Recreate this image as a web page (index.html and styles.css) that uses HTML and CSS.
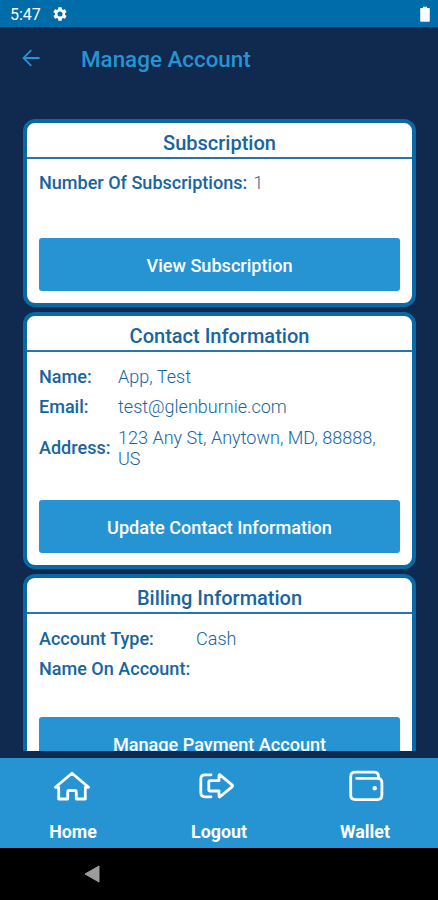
FILE: index.html
```html
<!DOCTYPE html>
<html lang="en">
<head>
<meta charset="utf-8">
<meta name="viewport" content="width=device-width, initial-scale=1">
<title>Manage Account</title>
<link rel="stylesheet" href="styles.css">
</head>
<body>
<div class="phone">
  <div class="status">
    <span class="time">5:47</span>
    <svg class="gear" viewBox="0 0 24 24"><path fill="#fff" fill-rule="evenodd" d="M19.4 13c0-.3.1-.6.1-1s0-.7-.1-1l2.2-1.700c.2-.1.200-.4.100-.6l-2-3.500c-.1-.2-.4-.3-.6-.2l-2.600 1c-.5-.4-1.100-.7-1.700-1l-.4-2.700c0-.2-.2-.4-.5-.4h-4c-.2 0-.4.200-.5.400l-.4 2.700c-.6.300-1.200.6-1.700 1l-2.500-1c-.2-.1-.5 0-.6.200l-2 3.500c-.1.200-.1.500.1.600L4.600 11c0 .3-.1.600-.1 1s0 .7.100 1l-2.200 1.700c-.2.100-.2.400-.1.600l2 3.500c.1.200.4.300.6.200l2.500-1c.5.400 1.100.7 1.700 1l.4 2.700c0 .2.300.4.500.4h4c.2 0 .5-.2.500-.4l.4-2.700c.6-.3 1.200-.6 1.700-1l2.500 1c.2.100.5 0 .6-.2l2-3.500c.1-.2.100-.5-.1-.6zM12 15.800a3.800 3.800 0 1 1 0-7.600 3.800 3.800 0 0 1 0 7.600z"/></svg>
    <svg class="battery" viewBox="0 0 10 16"><path fill="#fff" d="M1 2h2V.7h4V2h2q.8 0 .8.800V15q0 .7-.8.700H1q-.8 0-.8-.7V2.800Q.2 2 1 2z"/></svg>
  </div>
  <header class="appbar">
    <svg class="back" viewBox="0 0 18 18"><path d="M17.500 9H1.500M9.300 1.200L1.500 9l7.800 7.800"/></svg>
    <h1>Manage Account</h1>
  </header>
  <main class="content">
    <section class="card">
      <h2>Subscription</h2>
      <div class="row"><b>Number Of Subscriptions:</b><span>1</span></div>
      <button class="btn btn-first">View Subscription</button>
    </section>
    <section class="card">
      <h2>Contact Information</h2>
      <div class="fields">
        <b>Name:</b><span>App, Test</span>
        <b>Email:</b><span>test@glenburnie.com</span>
        <b>Address:</b><span>123 Any St, Anytown, MD, 88888, US</span>
      </div>
      <button class="btn">Update Contact Information</button>
    </section>
    <section class="card">
      <h2>Billing Information</h2>
      <div class="fields billing">
        <b>Account Type:</b><span>Cash</span>
        <b>Name On Account:</b><span></span>
      </div>
      <button class="btn btn-billing">Manage Payment Account</button>
    </section>
  </main>
  <nav class="tabs">
    <a class="tab"><svg viewBox="0 0 40 36"><path d="M5.700 18.300H2.400L19 4.200l16.600 14.100H32.300V30H23.300V23q0-1.500-1.500-1.500H16.200q-1.500 0-1.500 1.500V30H5.700z"/></svg><span>Home</span></a>
    <a class="tab"><svg viewBox="0 0 40 36"><path d="M12 5.800H6q-4.200 0-4.200 4.200V23.600q0 4.200 4.200 4.200H12"/><path d="M10.800 11.700H20V6.700q0-1.800 1.300-.6l11.700 9.700q1 1 0 2L21.300 27.500q-1.300 1.200-1.300-.6V22H10.800q-1 0-1-1v-8.300q0-1 1-1z"/></svg><span>Logout</span></a>
    <a class="tab"><svg viewBox="0 0 40 36"><path d="M33.500 9V7.500q0-4.300-4.300-4.300H10.200Q5.700 3.200 5.700 7.700v18.400q0 4.500 4.500 4.500h22.200q4.500 0 4.500-4.500V13.800q0-4.500-4.500-4.500H11.700"/><circle cx="29.700" cy="19.300" r="2.200"/></svg><span>Wallet</span></a>
  </nav>
  <footer class="system"><svg viewBox="0 0 18 20"><path d="M16 2v16L2 10z"/></svg></footer>
</div>
</body>
</html>
```
FILE: styles.css
```css
* { box-sizing: border-box; }
body { margin: 0; font-family: Roboto, sans-serif; color: #17659f; }
.phone { width: 438px; height: 900px; display: flex; flex-direction: column; background: #10294e; overflow: hidden; }
.status { height: 27px; flex: none; display: flex; align-items: center; background: #006ca9; color: #fff; padding: 1px 8px 0 10px; }
.time { font-size: 16px; width: 42px; }
.gear { width: 16px; height: 16px; }
.battery { width: 10px; height: 16px; margin-left: auto; }
.appbar { height: 92px; flex: none; display: flex; align-items: flex-start; padding: 21px 22px 0; }
.back { width: 18px; height: 18px; margin-top: 1px; fill: none; stroke: #2694d3; stroke-width: 1.8; }
h1 { margin: -2px 0 0 41px; font-size: 22.400px; line-height: 27px; font-weight: 500; color: #2694d3; }
.content { height: 632px; flex: none; overflow: hidden; padding: 0 22px 0 23px; display: flex; flex-direction: column; gap: 5px; }
.card { flex: none; border: 4px solid #0869a5; border-radius: 12px; background: #fff; padding-bottom: 12px; }
h2 { margin: 0; height: 36px; padding-top: 7px; line-height: 26px; font-size: 20px; font-weight: 500; text-align: center; border-bottom: 2px solid #2874ac; }
.row { display: flex; gap: 6px; padding: 13px 12px 0; line-height: 21px; font-size: 18.050px; }
b { font-weight: 500; }
.row span, .fields span { font-weight: 300; }
.fields { display: grid; grid-template-columns: 79px 1fr; align-items: center; row-gap: 9.500px; padding: 13.500px 12px 0; font-size: 18.050px; line-height: 21px; }
.billing { grid-template-columns: 157px 1fr; }
.billing b { white-space: nowrap; }
.btn { display: block; width: calc(100% - 24px); height: 53px; margin: 31.500px 12px 0; padding: 1px 0 0; border: 0; border-radius: 3px; background: #2694d3; color: #fff; font: 500 18.100px Roboto, sans-serif; }
.btn-first { margin-top: 45px; }
.btn-billing { margin-top: 38px; }
.tabs { height: 90px; flex: none; margin-top: 7px; background: #2694d3; display: flex; }
.tab { flex: 1; display: flex; flex-direction: column; align-items: center; padding-top: 11px; color: #fff; font-size: 17.800px; font-weight: 700; line-height: 22px; }
.tab svg { width: 40px; height: 36px; margin-bottom: 16px; fill: none; stroke: #fff; stroke-width: 2.800; stroke-linejoin: round; stroke-linecap: round; }
.tab circle { fill: #fff; stroke: none; }
.system { flex: 1; background: #000; padding: 16px 83px; }
.system svg { display: block; width: 18px; height: 20px; fill: #9c9c9c; stroke: #9c9c9c; stroke-width: 1; stroke-linejoin: round; }
```
